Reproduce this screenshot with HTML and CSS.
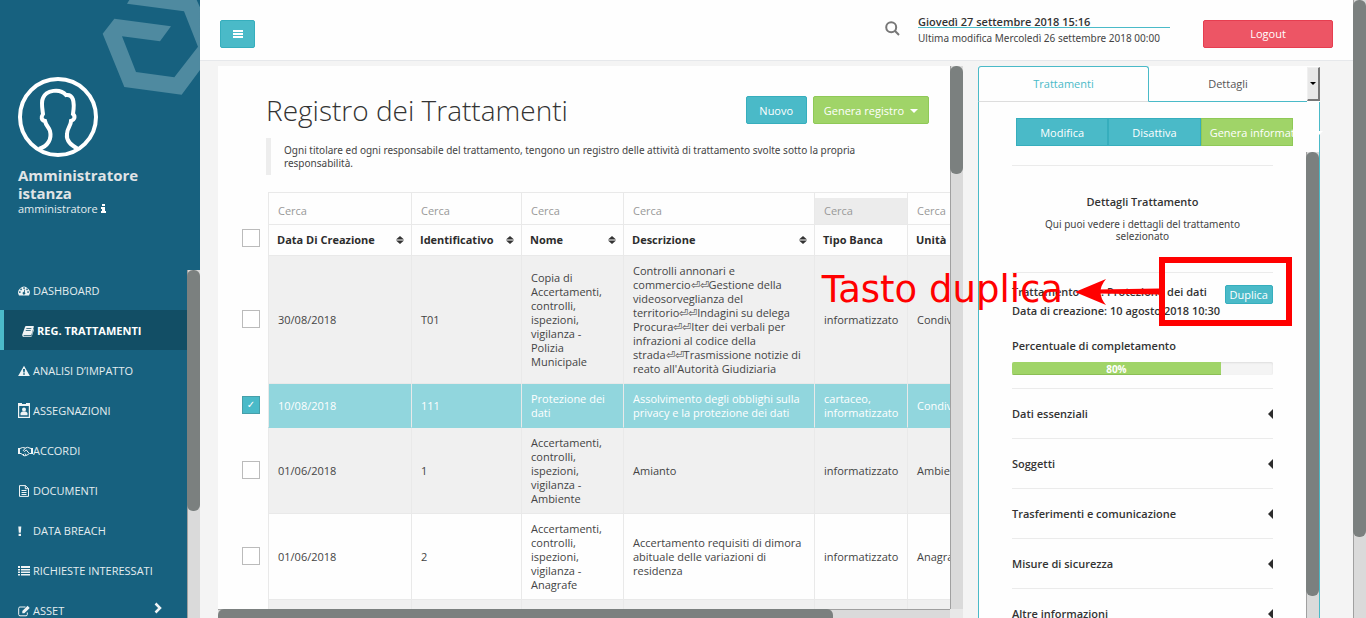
FILE: index.html
```html
<!DOCTYPE html>
<html lang="it">
<head>
<meta charset="utf-8">
<title>Registro dei Trattamenti</title>
<link rel="stylesheet" href="styles.css">
</head>
<body>
<div class="app">
  <aside class="sidebar">
    <div class="profile">
      <svg class="brand" viewBox="0 0 300 290" aria-hidden="true"><path d="M43 56 213 79 180 124 66 109 108 216 223 232 294 140 252 34 81 11 88 0H290L300 22V210L245 284 73 261 8 101Z"/></svg>
      <svg class="avatar" viewBox="0 0 80 80" aria-hidden="true"><circle cx="40" cy="40" r="38"/><path d="M21 72C30 69 34 62 32 54C31 50 28 49 27 44C23 43 23 40 25 37C24 30 23 25 25 21C28 13 42 11 48 18C55 17 57 24 55 37C58 40 56 43 53 44C53 49 49 51 49 57C48 64 53 68 60 72"/></svg>
      <h2 class="profile-name">Amministratore istanza</h2>
      <p class="profile-role">amministratore
        <svg class="info" viewBox="0 0 5 9" aria-hidden="true"><path d="M1 0h3v2H1zM0 3h4v4h1v2H0V7h1V5H0z"/></svg>
      </p>
    </div>
    <div class="menu-wrap">
      <nav class="menu">
        <a href="#"><svg viewBox="0 0 12 12"><path fill-rule="evenodd" d="M1 10.500A5.800 5.800 0 1 1 11 10.500ZM6 2.200a.8.800 0 1 0 .1 0ZM3 3.500a.8.800 0 1 0 .1 0ZM9 3.500a.8.800 0 1 0 .1 0ZM1.800 6.300a.8.800 0 1 0 .1 0ZM10 6.300a.8.800 0 1 0 .1 0ZM6.500 4.500 5.700 7a1.300 1.300 0 1 0 1 .2L7.200 4.600Z"/></svg>DASHBOARD</a>
        <a href="#" class="active"><svg viewBox="0 0 12 12"><path fill-rule="evenodd" d="M4 1h7.300q.8.200.5 1L9.500 9.500q-.3.800-1 .8H2q-.7 0-.6.500.1.400.8.400h7.200L11.500 4q.7.200.4 1L9.900 11q-.3 1-1.200 1H2Q0 11.800.2 9.800L3 2Q3.300 1 4 1ZM4.500 3.200l-.3.800h5l.3-.8ZM3.900 5.200l-.3.800h5l.3-.8Z"/></svg>REG. TRATTAMENTI</a>
        <a href="#"><svg viewBox="0 0 12 12"><path fill-rule="evenodd" d="M6 .8 11.900 11H.1ZM5 4l.3 3.500h1.400L7 4ZM5.200 8.300v1.500h1.600V8.300Z"/></svg>ANALISI D’IMPATTO</a>
        <a href="#"><svg class="tall" viewBox="0 0 12 15"><path fill-rule="evenodd" d="M0 0H4V1H8V0H12V15H0ZM1.200 3V13.800H10.800V3Z"/><circle cx="6" cy="6.500" r="2"/><path d="M2.500 12.200V10q1-1.500 2-1.500h3q1 0 2 1.500v2.200Z"/></svg>ASSEGNAZIONI</a>
        <a href="#"><svg class="wide" viewBox="0 0 15 12"><path d="M0 3h2v6H0zM13 3h2v6h-2z"/><path class="line" d="M2 3.500 4.500 2.500 7.500 3 9.500 2.300 13 3.500M2 8.500H3L6 10.800 8 10.600 10 9.500 11.500 8.500H13M7.500 3 5.300 5.500 6.500 6.400 8.300 5 11 8.300M6 10 5 9M8 10 7 8.500"/></svg>ACCORDI</a>
        <a href="#"><svg viewBox="0 0 12 12"><path class="line" d="M1.500.6H7.500L10.500 3.500V11.400H1.500ZM7.300.6V3.700H10.500M3.500 5.500H8.500M3.500 7.500H8.500M3.500 9.500H8.500"/></svg>DOCUMENTI</a>
        <a href="#"><svg viewBox="0 0 12 12"><path d="M.3 1.500H3.300L2.800 7.800H.8ZM.6 8.800H3V11H.6Z"/></svg>DATA BREACH</a>
        <a href="#"><svg viewBox="0 0 12 12"><path d="M0 1h2v2H0zM3 1h9v2H3zM0 4h2v1.500H0zM3 4h9v1.500H3zM0 6.500h2V8H0zM3 6.500h9V8H3zM0 9h2v1.500H0zM3 9h9v1.500H3z"/></svg>RICHIESTE INTERESSATI</a>
        <a href="#"><svg viewBox="0 0 12 12"><path class="line" d="M7.500 2H2Q.7 2 .7 3.300V9.500Q.7 10.800 2 10.800H8Q9.300 10.800 9.300 9.500V7.500"/><path d="M9.600.8 11.700 2.900 6.400 8.200H4.300V6.100Z"/></svg>ASSET<svg class="chevron" viewBox="0 0 8 12"><path class="line" d="M1.500 1.500 6 6 1.500 10.500"/></svg></a>
      </nav>
      <div class="vbar"><div class="thumb thumb-menu"></div></div>
    </div>
  </aside>

  <main class="main">
    <header class="topbar">
      <button class="btn teal burger" aria-label="Menu"><svg viewBox="0 0 10 8"><path d="M0 0h10v2H0zM0 3h10v2H0zM0 6h10v2H0z"/></svg></button>
      <div class="top-right">
        <button class="search" aria-label="Cerca"><svg viewBox="0 0 15 15"><circle cx="6.200" cy="6.200" r="5"/><path d="M9.800 9.800 14 14"/></svg></button>
        <div class="dates">
          <p class="today">Giovedì 27 settembre 2018 15:16</p>
          <p class="modified">Ultima modifica Mercoledì 26 settembre 2018 00:00</p>
        </div>
        <button class="btn red">Logout</button>
      </div>
    </header>

    <div class="content">
      <section class="register">
        <div class="register-body">
          <div class="register-head">
            <h1>Registro dei Trattamenti</h1>
            <div class="actions">
              <button class="btn teal">Nuovo</button>
              <button class="btn green">Genera registro <span class="caret"></span></button>
            </div>
          </div>
          <blockquote>Ogni titolare ed ogni responsabile del trattamento, tengono un registro delle attività di trattamento svolte sotto la propria responsabilità.</blockquote>
          <table>
            <colgroup><col class="c-check"><col class="c-date"><col class="c-id"><col class="c-name"><col class="c-desc"><col class="c-type"><col class="c-unit"></colgroup>
            <thead>
              <tr class="filters">
                <td class="check"></td>
                <td><input type="text" placeholder="Cerca" aria-label="Cerca data"></td>
                <td><input type="text" placeholder="Cerca" aria-label="Cerca identificativo"></td>
                <td><input type="text" placeholder="Cerca" aria-label="Cerca nome"></td>
                <td><input type="text" placeholder="Cerca" aria-label="Cerca descrizione"></td>
                <td><input type="text" placeholder="Cerca" aria-label="Cerca tipo banca" disabled></td>
                <td><input type="text" placeholder="Cerca" aria-label="Cerca unità"></td>
              </tr>
              <tr class="heads">
                <td class="check"><input type="checkbox" aria-label="Seleziona tutti"></td>
                <th><div>Data Di Creazione<svg class="sort" viewBox="0 0 8 8"><path d="M4 0 8 3.500H0ZM4 8 0 4.500H8Z"/></svg></div></th>
                <th><div>Identificativo<svg class="sort" viewBox="0 0 8 8"><path d="M4 0 8 3.500H0ZM4 8 0 4.500H8Z"/></svg></div></th>
                <th><div>Nome<svg class="sort" viewBox="0 0 8 8"><path d="M4 0 8 3.500H0ZM4 8 0 4.500H8Z"/></svg></div></th>
                <th><div>Descrizione<svg class="sort" viewBox="0 0 8 8"><path d="M4 0 8 3.500H0ZM4 8 0 4.500H8Z"/></svg></div></th>
                <th>Tipo Banca</th>
                <th>Unità</th>
              </tr>
            </thead>
            <tbody>
              <tr class="odd">
                <td class="check"><input type="checkbox" aria-label="Seleziona T01"></td>
                <td>30/08/2018</td><td>T01</td><td>Copia di Accertamenti, controlli, ispezioni, vigilanza - Polizia Municipale</td>
                <td>Controlli annonari e<br>commercio⏎⏎Gestione della<br>videosorveglianza del<br>territorio⏎⏎Indagini su delega<br>Procura⏎⏎Iter dei verbali per<br>infrazioni al codice della<br>strada⏎⏎Trasmissione notizie di<br>reato all'Autorità Giudiziaria</td>
                <td>informatizzato</td><td>Condivisa</td>
              </tr>
              <tr class="selected">
                <td class="check"><input type="checkbox" aria-label="Seleziona 111" checked></td>
                <td>10/08/2018</td><td>111</td><td>Protezione dei dati</td><td>Assolvimento degli obblighi sulla privacy e la protezione dei dati</td><td>cartaceo, informatizzato</td><td>Condivisa</td>
              </tr>
              <tr class="odd">
                <td class="check"><input type="checkbox" aria-label="Seleziona 1"></td>
                <td>01/06/2018</td><td>1</td><td>Accertamenti, controlli, ispezioni, vigilanza - Ambiente</td><td>Amianto</td><td>informatizzato</td><td>Ambiente</td>
              </tr>
              <tr>
                <td class="check"><input type="checkbox" aria-label="Seleziona 2"></td>
                <td>01/06/2018</td><td>2</td><td>Accertamenti, controlli, ispezioni, vigilanza - Anagrafe</td><td>Accertamento requisiti di dimora abituale delle variazioni di residenza</td><td>informatizzato</td><td>Anagrafe</td>
              </tr>
              <tr class="odd blank"><td class="check"></td><td></td><td></td><td></td><td></td><td></td><td></td></tr>
            </tbody>
          </table>
        </div>
        <div class="vbar"><div class="thumb thumb-register"></div></div>
        <div class="hbar"><div class="hthumb"></div></div>
        <div class="corner"></div>
      </section>

      <section class="detail">
        <div class="tabs">
          <button class="tab current">Trattamenti</button>
          <button class="tab">Dettagli</button>
          <button class="tab-more" aria-label="Altre schede"><span class="caret"></span></button>
        </div>
        <div class="detail-body">
          <div class="btn-group">
            <button class="btn teal">Modifica</button>
            <button class="btn teal">Disattiva</button>
            <button class="btn green">Genera informativa <span class="caret"></span></button>
          </div>
          <div class="detail-scroll">
            <div class="detail-content">
              <div class="intro">
                <h3>Dettagli Trattamento</h3>
                <p>Qui puoi vedere i dettagli del trattamento selezionato</p>
              </div>
              <div class="summary">
                <div class="record">
                  <div>
                    <p>Trattamento 111: Protezione dei dati</p>
                    <p>Data di creazione: 10 agosto 2018 10:30</p>
                  </div>
                  <button class="btn teal small">Duplica</button>
                </div>
                <p class="progress-label">Percentuale di completamento</p>
                <div class="progress"><div class="progress-fill" style="width: 80%">80%</div></div>
              </div>
              <button class="fold">Dati essenziali<span class="left"></span></button>
              <button class="fold">Soggetti<span class="left"></span></button>
              <button class="fold">Trasferimenti e comunicazione<span class="left"></span></button>
              <button class="fold">Misure di sicurezza<span class="left"></span></button>
              <button class="fold">Altre informazioni<span class="left"></span></button>
            </div>
            <div class="vbar"><div class="thumb thumb-detail"></div></div>
          </div>
        </div>
      </section>
    </div>
  </main>
  <div class="vbar page-bar"><div class="thumb thumb-page"></div></div>

  <div class="callout">
    <span>Tasto duplica</span>
    <svg viewBox="0 0 84 26" aria-hidden="true"><path d="M0 13 31 0Q20 13 31 26Z"/><path d="M22 10.500 84 9.500V15.500L22 14.500Z"/></svg>
    <div class="callout-box"></div>
  </div>
</div>
</body>
</html>
```

FILE: styles.css
```css
* { box-sizing: border-box; }
body {
  margin: 0;
  font: 11px/14px "Open Sans", "Noto Sans", sans-serif;
  color: #444;
  background: #f4f4f4;
}
h1, h2, h3, p, blockquote { margin: 0; }
button, input { font: inherit; }
button { cursor: pointer; }

.app { position: relative; display: flex; height: 100vh; overflow: hidden; }

/* Scroll bars */
.vbar { width: 13px; flex: none; background: #dadada; border-left: 1px solid #a0a0a0; }
.thumb { width: 13px; margin-left: -1px; background: #7b807f; border-radius: 6px; }
.thumb-menu { height: 241px; }
.thumb-register { height: 108px; }
.thumb-detail { height: 444px; }
.thumb-page { height: 537px; }

/* Sidebar */
.sidebar { width: 200px; flex: none; display: flex; flex-direction: column; background: #17617f; color: #e4edf0; }
.profile { position: relative; height: 270px; flex: none; padding: 77px 18px 0; }
.brand { position: absolute; top: 0; right: 0; width: 100px; fill: #4f8aa0; }
.avatar { display: block; width: 80px; height: 80px; fill: none; stroke: #fff; stroke-width: 4; }
.profile-name { margin-top: 9px; padding-right: 30px; font-size: 15px; line-height: 18px; color: #e0e4e6; }
.profile-role { line-height: 14px; }
.info { width: 5px; height: 9px; fill: #fff; }
.menu-wrap { flex: 1; min-height: 0; display: flex; overflow: hidden; }
.menu { flex: 1; }
.menu a { display: flex; align-items: center; height: 40px; padding: 1px 18px 0; color: #e4edf0; text-decoration: none; }
.menu svg { width: 12px; height: 12px; margin-right: 3px; fill: #f0f4f5; flex: none; }
.menu .tall { height: 15px; }
.menu .wide { width: 15px; margin-right: 0; }
.menu .line { fill: none; stroke: #f0f4f5; stroke-width: 1; }
.menu .chevron { width: 8px; margin: 0 7px 6px auto; }
.menu .chevron .line { stroke-width: 2.5; }
.menu .active { background: #124e65; border-left: 4px solid #4bbbc9; font-weight: 700; color: #fff; }

/* Buttons */
.btn { display: flex; align-items: center; justify-content: center; height: 28px; padding: 1px 12px 0; border: 1px solid; border-radius: 2px; line-height: 16px; color: #fff; white-space: nowrap; }
.teal { background: #4abac8; border-color: #36aebd; }
.green { background: #a0d468; border-color: #8fc957; }
.red { background: #ed5565; border-color: #e63e50; width: 130px; padding: 0 12px; }
.small { height: 19px; padding: 0 4px; line-height: 14px; font-weight: 400; }
.caret { border: 4px solid transparent; border-top-color: currentColor; border-bottom: 0; margin-left: 6px; }

/* Header */
.main { flex: 1; min-width: 0; display: flex; flex-direction: column; }
.topbar { display: flex; justify-content: space-between; align-items: flex-start; height: 61px; flex: none; padding: 0 20px; background: #fefefe; border-bottom: 1px solid #e6e8eb; }
.burger { width: 35px; margin-top: 20px; padding: 0; }
.burger svg { width: 10px; height: 8px; fill: #fff; }
.top-right { display: flex; align-items: flex-start; }
.search { margin-top: 21px; padding: 0; border: 0; background: none; }
.search svg { display: block; width: 15px; height: 15px; fill: none; stroke: #777; stroke-width: 2; }
.dates { min-width: 252px; margin: 16px 33px 0 18px; }
.today { line-height: 11px; border-bottom: 1px solid #4abac8; font-weight: 600; color: #333; }
.modified { padding-top: 3px; font-family: "Noto Sans", sans-serif; font-size: 10px; }
.top-right .btn { margin-top: 20px; }

/* Register */
.content { flex: 1; min-height: 0; display: grid; grid-template-columns: minmax(0, 745fr) minmax(0, 342fr); gap: 15px; padding: 5px 33px 0 18px; }
.register { min-height: 0; display: grid; grid-template: minmax(0, 1fr) 9px / minmax(0, 1fr) 13px; }
.register-body { overflow: hidden; background: #fefefe; padding: 30px 0 0 24px; }
.hbar { background: #dadada; border-top: 1px solid #a0a0a0; }
.hthumb { width: 84%; height: 9px; margin-top: -1px; background: #7b807f; border-radius: 6px 6px 0 0; }
.corner { background: #e8e8e8; }
.register-head { display: flex; justify-content: space-between; padding: 0 21px 0 24px; }
h1 { font-size: 28px; line-height: 28px; font-weight: 300; color: #333; }
.actions { display: flex; gap: 6px; }
.actions .btn { min-width: 61px; padding: 1px 10px 0; }
blockquote { margin: 14px 21px 17px 24px; padding: 6px 13px 5px; border-left: 5px solid #ededed; font-family: "Noto Sans", sans-serif; font-size: 10px; line-height: 13px; }

table { width: 740px; table-layout: fixed; border-collapse: separate; border-spacing: 0; }
.c-check { width: 26px; }
.c-date { width: 143px; }
.c-id { width: 110px; }
.c-name { width: 102px; }
.c-desc { width: 191px; }
.c-type { width: 93px; }
td, th { padding: 8px 8px 7px 9px; border-left: 1px solid #e9e9e9; border-bottom: 1px solid #e9e9e9; text-align: left; }
.check, .odd .check, .selected .check { padding: 0; border: 0; background: none; }
.filters td { height: 33px; padding: 5px 0 0; border-top: 1px solid #e9e9e9; }
.filters .check { border: 0; }
.filters input { display: block; width: 100%; height: 26px; padding: 0 9px 2px; border: 0; border-radius: 0; background: none; }
.filters input:disabled { background: #ececec; }
.filters input::placeholder { color: #999; opacity: 1; }
.heads th { height: 31px; padding: 0 7px 0 8px; color: #2c2c2c; }
.heads th div { display: flex; justify-content: space-between; align-items: center; }
.sort { width: 8px; height: 8px; fill: #333; }
.odd td { background: #f0f0f0; }
.selected td { background: #91d6dd; color: #fff; border-bottom-color: #91d6dd; }
.blank td { height: 86px; }
input[type="checkbox"] { appearance: none; display: grid; place-items: center; width: 18px; height: 18px; margin: 0 0 2px; border: 1px solid #bbb; background: #fff; }
.heads input[type="checkbox"] { margin-bottom: 5px; }
input[type="checkbox"]:checked { background: #4abac8; border-color: #469fa9; }
input[type="checkbox"]:checked::before { content: "✓"; font-family: "DejaVu Sans", sans-serif; font-size: 10px; color: #fff; }

/* Detail panel */
.detail { min-height: 0; display: flex; flex-direction: column; }
.tabs { display: flex; height: 36px; flex: none; background: #fefefe; }
.tab { flex: 1; padding: 0; border: 0; border-bottom: 1px solid #4abac8; background: none; color: #555; }
.tab.current { flex: none; width: 50%; border: 1px solid #4abac8; border-bottom-color: #ddd; border-radius: 3px 3px 0 0; color: #4abac8; }
.tab-more { display: grid; place-items: center; width: 13px; margin: 1px 0; padding: 0; background: #e8e8e8; border: 1px solid; border-color: #f0f0f0 #777 #777 #f0f0f0; border-width: 1px 2px 2px 1px; color: #000; }
.tab-more .caret { margin: 0; border-width: 3px 3px 0; }
.detail-body { flex: 1; min-height: 0; display: flex; flex-direction: column; padding-top: 16px; background: #fefefe; border: 1px solid #4abac8; border-width: 0 1px; }
.btn-group { display: grid; grid-template-columns: repeat(3, minmax(0, 1fr)); flex: none; margin: 0 26px 6px 37px; }
.btn-group .btn { border-radius: 0; }
.btn-group .green { justify-content: flex-start; padding: 1px 8px 0; }
.btn-group .caret { flex: none; margin-left: 6px; }
.detail-scroll { flex: 1; min-height: 0; display: flex; overflow: hidden; }
.detail-content { flex: 1; padding: 13px 33px 0; }
.intro { height: 107px; padding-top: 29px; border-top: 1px solid #ebebeb; text-align: center; }
h3, .record, .progress-label, .fold { font-size: 11px; line-height: 14px; font-weight: 600; color: #333; }
.intro p { margin: 9px 20px 0; font-family: "Noto Sans", sans-serif; font-size: 10px; line-height: 12px; }
.summary { height: 116px; padding-top: 12px; border-top: 1px solid #ebebeb; }
.record { display: flex; justify-content: space-between; white-space: nowrap; }
.record p + p { margin-top: 5px; }
.progress-label { margin: 21px 0 9px; }
.progress { height: 13px; border-radius: 2px; overflow: hidden; background: #f4f4f4; box-shadow: inset 0 1px 2px #ddd; }
.progress-fill { height: 13px; background: #a0d468; border-bottom: 1px solid #8bbf55; text-align: center; font-size: 10px; line-height: 14px; font-weight: 700; color: #fff; }
.fold { display: flex; justify-content: space-between; align-items: center; width: 100%; height: 50px; padding: 0; border: 0; border-top: 1px solid #ebebeb; background: none; text-align: left; }
.left { border: 5px solid transparent; border-right-color: #2c2c2c; border-left: 0; }

/* Callout over the duplicate button */
.callout { position: absolute; top: 257px; right: 74px; display: flex; align-items: center; }
.callout span { padding-bottom: 4px; font: 37px/44px "DejaVu Sans", sans-serif; color: #f00; white-space: nowrap; }
.callout svg { width: 84px; height: 26px; margin: 0 0 0 12px; fill: #f00; }
.callout-box { width: 133px; height: 69px; border: 6px solid #f00; }
```
